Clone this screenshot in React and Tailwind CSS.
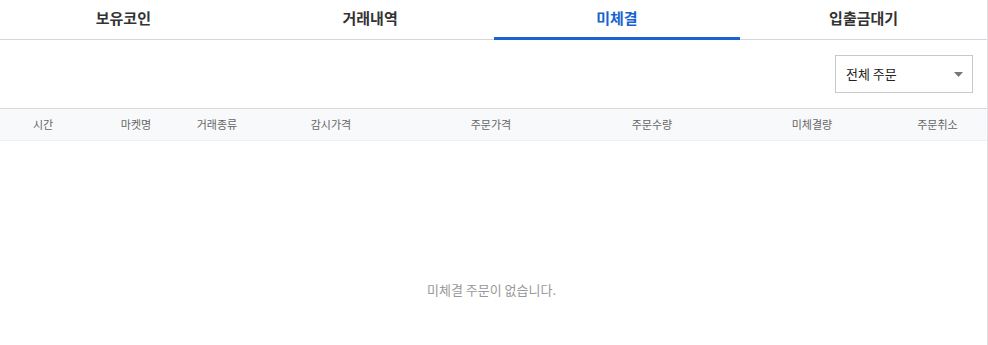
export default function App() {
  const tabs = ["보유코인", "거래내역", "미체결", "입출금대기"];
  const active = 2;
  const cols = ["시간", "마켓명", "거래종류", "감시가격", "주문가격", "주문수량", "미체결량", "주문취소"];
  return (
    <div
      className="w-[988px] h-[345px] bg-white overflow-hidden"
      style={{ fontFamily: '"Noto Sans CJK KR", "Noto Sans", sans-serif' }}
    >
      <div className="w-[988px] h-full border-r border-[#dfe0e4] flex flex-col">
        <div className="flex h-[40px] border-b border-[#d5d6dc]">
          {tabs.map((t, i) => (
            <div
              key={t}
              className={`flex-1 relative flex items-center justify-center text-[15px] font-bold ${
                i === active ? "text-[#1763d0]" : "text-[#333]"
              }`}
            >
              <span className="-mt-[2px]">{t}</span>
              {i === active && (
                <div className="absolute left-0 right-0 bottom-[-1px] h-[3px] bg-[#1763d0]" />
              )}
            </div>
          ))}
        </div>
        <div className="flex justify-end pt-[15px] pr-[14px] pb-[15px]">
          <div className="w-[138px] h-[38px] border border-[#c8c8c8] flex items-center justify-between pl-[10px] pr-[9px]">
            <span className="text-[13px] text-[#222]">전체 주문</span>
            <svg width="9" height="5" viewBox="0 0 9 5">
              <path d="M0 0H9L4.5 5Z" fill="#777" />
            </svg>
          </div>
        </div>
        <div className="grid grid-cols-[86px_100px_62px_166px_154px_168px_152px_1fr] h-[33px] bg-[#f8f9fb] border-t border-[#d8d9dd] border-b border-b-[#eeeff2] text-[11px] text-[#666]">
          {cols.map((c) => (
            <div key={c} className="flex items-center justify-center">
              {c}
            </div>
          ))}
        </div>
        <div className="flex-1 flex justify-center pt-[139px]">
          <span className="text-[13px] text-[#999] ml-[-4px]">미체결 주문이 없습니다.</span>
        </div>
      </div>
    </div>
  );
}
